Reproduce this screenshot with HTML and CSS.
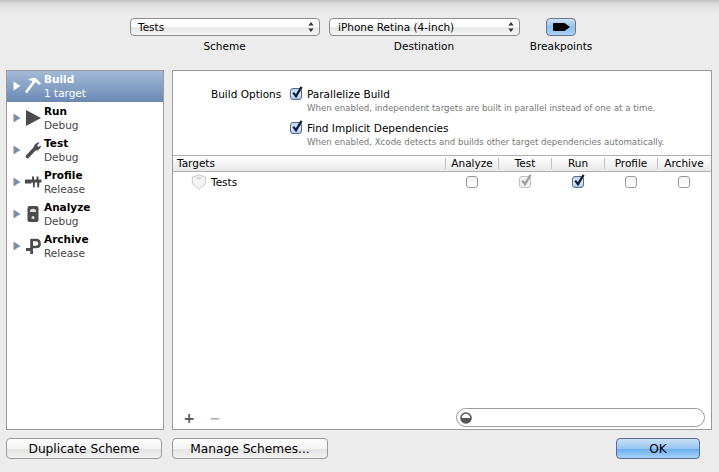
FILE: index.html
```html
<!DOCTYPE html>
<html lang="en">
<head>
<meta charset="utf-8">
<title>Scheme</title>
<link rel="stylesheet" href="styles.css">
</head>
<body>
<svg class="defs" width="0" height="0">
  <symbol id="tick" viewBox="0 0 14 14"><path d="M3.2 6.6 L6 10.2 L11.6 0.8" fill="none" stroke="currentColor" stroke-width="2.3"/></symbol>
  <symbol id="arrow" viewBox="0 0 8 10"><path d="M0.5 0.5 L7.5 5 L0.5 9.5 Z" fill="currentColor"/></symbol>
</svg>
<header class="top">
  <div class="field">
    <div class="popup popup-scheme"><span>Tests</span><svg class="updown" viewBox="0 0 6 10" width="6" height="10"><path d="M3 0 L5.6 3.6 H0.4 Z M3 10 L5.6 6.4 H0.4 Z" fill="#333"/></svg></div>
    <div class="field-label">Scheme</div>
  </div>
  <div class="field">
    <div class="popup popup-dest"><span>iPhone Retina (4-inch)</span><svg class="updown" viewBox="0 0 6 10" width="6" height="10"><path d="M3 0 L5.6 3.6 H0.4 Z M3 10 L5.6 6.4 H0.4 Z" fill="#333"/></svg></div>
    <div class="field-label">Destination</div>
  </div>
  <div class="field field-bp">
    <div class="bp-btn"><svg viewBox="0 0 17 8" width="17" height="8"><path d="M0 1 Q0 0 1 0 H11.5 L17 4 L11.5 8 H1 Q0 8 0 7 Z" fill="#000"/></svg></div>
    <div class="field-label">Breakpoints</div>
  </div>
</header>

<main class="main">
  <nav class="sidebar">
    <div class="act act-on">
      <svg class="tri" width="8" height="10"><use href="#arrow"/></svg>
      <svg class="ico" viewBox="0 0 18 18" width="18" height="18"><path d="M2 15.5 L10.5 4" fill="none" stroke="#fff" stroke-width="2.6"/><path d="M4 3 Q8.5 0 11.5 0.8 L17 6.5 L15.4 8 L12 5.2 L9 5.6 L7.5 3.4 Z" fill="#fff"/></svg>
      <div class="act-text"><b>Build</b><span>1 target</span></div>
    </div>
    <div class="act">
      <svg class="tri" width="8" height="10"><use href="#arrow"/></svg>
      <svg class="ico" viewBox="0 0 18 18" width="18" height="18"><path d="M2 1 L17 9 L2 17 Z" fill="#4c4c4c"/></svg>
      <div class="act-text"><b>Run</b><span>Debug</span></div>
    </div>
    <div class="act">
      <svg class="tri" width="8" height="10"><use href="#arrow"/></svg>
      <svg class="ico" viewBox="0 0 18 18" width="18" height="18"><path d="M3.5 15.5 L10.5 8" stroke="#4c4c4c" stroke-width="3.6" stroke-linecap="round"/><path d="M10 7 Q10 2.5 15 1.5 L13 4.6 L14.2 6.2 L16.8 5 Q15.5 10 10.8 9 Z" fill="#4c4c4c" stroke="#4c4c4c" stroke-width="0.6"/></svg>
      <div class="act-text"><b>Test</b><span>Debug</span></div>
    </div>
    <div class="act">
      <svg class="tri" width="8" height="10"><use href="#arrow"/></svg>
      <svg class="ico" viewBox="0 0 18 18" width="18" height="18"><path d="M1 6.5 H17.5 V9.5 H15.5 L15 14.5 H13.4 L13 9.5 H11 L10.5 14.5 H9 L8.8 9.5 H7.4 V10.5 H1 Z M8 3.5 H10 V6.5 H8 Z M12.5 3.5 H14.5 V6.5 H12.5 Z" fill="#4c4c4c"/></svg>
      <div class="act-text"><b>Profile</b><span>Release</span></div>
    </div>
    <div class="act">
      <svg class="tri" width="8" height="10"><use href="#arrow"/></svg>
      <svg class="ico" viewBox="0 0 18 18" width="18" height="18"><rect x="3.5" y="1" width="11" height="16" rx="2" fill="#4c4c4c"/><path d="M5.8 7 A3.2 3.2 0 0 1 12.2 7 Z" fill="#ddd"/><circle cx="9" cy="12.5" r="1.6" fill="#ddd"/></svg>
      <div class="act-text"><b>Analyze</b><span>Debug</span></div>
    </div>
    <div class="act">
      <svg class="tri" width="8" height="10"><use href="#arrow"/></svg>
      <svg class="ico" viewBox="0 0 18 18" width="18" height="18"><path d="M7 3 H12 Q15.6 3 15.6 6.4 Q15.6 10 12 10 H9" fill="none" stroke="#4c4c4c" stroke-width="2.6"/><path d="M9 2 V17 H6.2 V14 H2 V11 H6.2 V2 Z" fill="#4c4c4c"/></svg>
      <div class="act-text"><b>Archive</b><span>Release</span></div>
    </div>
  </nav>

  <section class="panel">
    <div class="options">
      <div class="opt-label">Build Options</div>
      <div class="opt-list">
        <div class="opt">
          <div class="opt-line"><span class="cb cb-on"><svg width="14" height="14"><use href="#tick"/></svg></span><span class="opt-title">Parallelize Build</span></div>
          <p class="opt-desc">When enabled, independent targets are built in parallel instead of one at a time.</p>
        </div>
        <div class="opt">
          <div class="opt-line"><span class="cb cb-on"><svg width="14" height="14"><use href="#tick"/></svg></span><span class="opt-title">Find Implicit Dependencies</span></div>
          <p class="opt-desc">When enabled, Xcode detects and builds other target dependencies automatically.</p>
        </div>
      </div>
    </div>

    <div class="thead">
      <div class="th th-first">Targets</div>
      <div class="th">Analyze</div>
      <div class="th">Test</div>
      <div class="th">Run</div>
      <div class="th">Profile</div>
      <div class="th">Archive</div>
    </div>
    <div class="trow">
      <div class="target">
        <svg viewBox="0 0 16 16" width="16" height="16"><path d="M8 0.8 L14.6 3.2 V9.6 L8 15.2 L1.4 9.6 V3.2 Z" fill="#f4f4f4" stroke="#c9c9c9"/><path d="M8 2.6 L11.5 4.2 L8 5.8 L4.5 4.2 Z" fill="#d8d8d8"/></svg>
        <span>Tests</span>
      </div>
      <div class="cell"><span class="cb"></span></div>
      <div class="cell"><span class="cb cb-dis"><svg width="14" height="14"><use href="#tick"/></svg></span></div>
      <div class="cell"><span class="cb cb-on"><svg width="14" height="14"><use href="#tick"/></svg></span></div>
      <div class="cell"><span class="cb"></span></div>
      <div class="cell"><span class="cb"></span></div>
    </div>

    <div class="panel-foot">
      <span class="add">+</span>
      <span class="remove">&minus;</span>
      <div class="search"><svg viewBox="0 0 12 12" width="12" height="12"><circle cx="6" cy="6" r="5" fill="#fff" stroke="#555" stroke-width="1.6"/><path d="M1 6 A5 5 0 0 0 11 6 Z" fill="#555"/></svg></div>
    </div>
  </section>
</main>

<footer class="foot">
  <button class="btn btn-wide">Duplicate Scheme</button>
  <button class="btn btn-wide btn-manage">Manage Schemes...</button>
  <button class="btn btn-ok">OK</button>
</footer>
</body>
</html>
```
FILE: styles.css
```css
* { box-sizing: border-box; }
html, body { margin: 0; height: 472px; overflow: hidden; }
body {
  background: #ececec;
  color: #000;
  font: 11px/14px "DejaVu Sans", sans-serif;
  width: 719px;
}
.defs { display: block; height: 0; }

.top {
  height: 70px;
  padding: 18px 0 0 130px;
  display: flex;
  background: linear-gradient(#c4c4c4 0, #dcdcdc 4px, #ececec 14px);
}
.field { display: flex; flex-direction: column; align-items: center; margin-right: 9px; }
.field-bp { width: 62px; margin: 0 0 0 1px; }
.field-label { margin-top: 2px; padding-right: 1px; line-height: 16px; font-size: 10.5px; }
.field-bp .field-label { padding: 0; }
.popup {
  height: 18px;
  display: flex;
  align-items: center;
  justify-content: space-between;
  padding: 0 5px 0 7px;
  border: 1px solid #8c8c8c;
  border-radius: 4px;
  background: linear-gradient(#fff 0, #fafafa 50%, #e6e6e6 55%, #f6f6f6 100%);
  font-size: 10.5px;
}
.popup-scheme { width: 190px; }
.popup-dest { width: 191px; padding-left: 8px; }
.bp-btn {
  width: 30px;
  height: 18px;
  border: 1px solid #6a7688;
  border-radius: 4px;
  background: linear-gradient(#cfe4f9, #8fc0f0 50%, #a8d2f8);
  display: flex;
  align-items: center;
  justify-content: center;
}

.main { height: 360px; display: flex; padding-left: 6px; }
.sidebar {
  width: 158px;
  background: #fff;
  border: 1px solid #9a9a9a;
  flex: none;
}
.act {
  height: 32px;
  display: flex;
  align-items: center;
  padding: 0 0 2px 6px;
  color: #333;
}
.act-on {
  height: 31px;
  margin-bottom: 1px;
  color: #fff;
  background: linear-gradient(#a2bad6, #6c89b4);
}
.tri { color: #7f8ea3; flex: none; margin-right: 3px; }
.act-on .tri { color: #fff; }
.ico { flex: none; margin-right: 2px; }
.act-text { display: flex; flex-direction: column; line-height: 14px; font-size: 10.5px; }
.act-text b { color: #000; }
.act-on .act-text b { color: #fff; }
.act-text span { color: #444; }
.act-on .act-text span { color: #fff; }

.panel {
  width: 540px;
  margin-left: 8px;
  background: #fff;
  border: 1px solid #9a9a9a;
  display: flex;
  flex-direction: column;
}
.options {
  height: 84px;
  display: flex;
  padding: 16px 0 0 38px;
  font-size: 10.5px;
}
.opt-label { width: 79px; line-height: 14px; }
.opt { height: 34px; }
.opt-line { display: flex; align-items: center; height: 14px; }
.opt-title { margin-left: 5px; }
.opt-desc {
  margin: 1px 0 0 17px;
  font-size: 8.65px;
  line-height: 13px;
  color: #777;
  white-space: nowrap;
}
.cb {
  width: 12px;
  height: 12px;
  flex: none;
  position: relative;
  display: block;
  border: 1px solid #9a9a9a;
  border-radius: 3px;
  background: linear-gradient(#f2f2f2, #fff);
}
.cb svg { position: absolute; left: -1px; top: -3px; }
.cb-on { border-color: #5c6b85; background: linear-gradient(#bcd4ef, #dfeeff 50%, #a9c9ec); color: #10203a; }
.cb-dis { color: #a0a0a0; border-color: #c0c0c0; background: #f2f2f2; }

.thead {
  height: 17px;
  display: grid;
  grid-template-columns: 272px repeat(5, 53px);
  border-top: 1px solid #b0b0b0;
  border-bottom: 1px solid #b0b0b0;
  background: linear-gradient(#fff, #e8e8e8);
  font-size: 10.5px;
  line-height: 15px;
}
.th { text-align: center; position: relative; padding-left: 1px; }
.th-first { text-align: left; padding-left: 4px; }
.th + .th::before {
  content: "";
  position: absolute;
  left: 0;
  top: 2px;
  bottom: 2px;
  width: 1px;
  background: #c0c0c0;
}
.trow {
  height: 19px;
  display: grid;
  grid-template-columns: 272px repeat(5, 53px);
  align-items: center;
}
.target { display: flex; align-items: center; padding-left: 18px; font-size: 10.5px; }
.target span { margin-left: 4px; }
.cell { display: flex; justify-content: center; }

.panel-foot {
  margin-top: auto;
  height: 22px;
  display: flex;
  align-items: center;
  padding: 0 6px 1px 0;
  color: #555;
}
.add { width: 12px; margin-left: 10px; font: bold 14px/14px "DejaVu Sans", sans-serif; text-align: center; }
.remove { width: 12px; margin-left: 14px; font: bold 14px/14px "DejaVu Sans", sans-serif; text-align: center; color: #b0b0b0; }
.search {
  margin-left: auto;
  width: 249px;
  height: 19px;
  border: 1px solid #9a9a9a;
  border-radius: 10px;
  display: flex;
  align-items: center;
  padding-left: 3px;
  background: #fff;
}

.foot { height: 42px; display: flex; padding: 8px 19px 0 6px; }
.btn {
  height: 21px;
  padding: 0;
  font: 12.2px/18px "DejaVu Sans", sans-serif;
  color: #000;
  border: 1px solid #9a9a9a;
  border-radius: 4px;
  background: linear-gradient(#fff, #f4f4f4 50%, #e4e4e4 55%, #f2f2f2);
}
.btn-wide { width: 156px; }
.btn-manage { margin-left: 10px; }
.btn-ok {
  margin-left: auto;
  width: 84px;
  border-color: #5a6a90;
  background: linear-gradient(#c8e0f8, #98c6f2 50%, #6fb0ee 55%, #a6d4fa);
}
```
